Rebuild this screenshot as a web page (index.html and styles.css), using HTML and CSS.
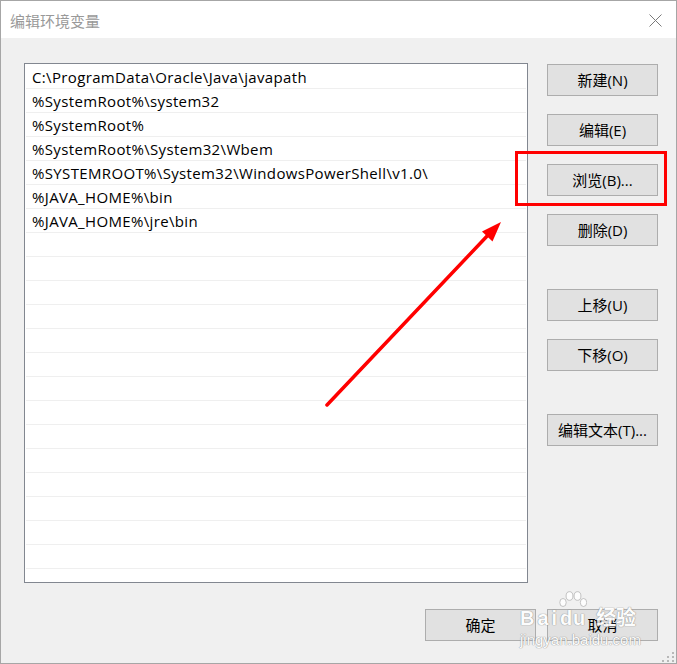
FILE: index.html
```html
<!DOCTYPE html>
<html lang="zh-CN">
<head>
<meta charset="utf-8">
<title>编辑环境变量</title>
<link rel="stylesheet" href="styles.css">
</head>
<body>
<div class="window">
  <div class="titlebar">
    <span class="title">编辑环境变量</span>
    <svg class="close" width="13" height="13" viewBox="0 0 13 13"><path d="M0.5 0.5 L12.5 12.5 M12.5 0.5 L0.5 12.5" stroke="#7a7a7a" stroke-width="1" fill="none"/></svg>
  </div>
  <div class="body">
    <div class="main">
      <div class="listbox">
        <div class="row">C:\ProgramData\Oracle\Java\javapath</div>
        <div class="row">%SystemRoot%\system32</div>
        <div class="row">%SystemRoot%</div>
        <div class="row">%SystemRoot%\System32\Wbem</div>
        <div class="row">%SYSTEMROOT%\System32\WindowsPowerShell\v1.0\</div>
        <div class="row">%JAVA_HOME%\bin</div>
        <div class="row">%JAVA_HOME%\jre\bin</div>
        <div class="row"></div><div class="row"></div><div class="row"></div>
        <div class="row"></div><div class="row"></div><div class="row"></div>
        <div class="row"></div><div class="row"></div><div class="row"></div>
        <div class="row"></div><div class="row"></div><div class="row"></div>
        <div class="row"></div><div class="row"></div><div class="row"></div>
      </div>
      <div class="actions">
        <button class="btn">新建(N)</button>
        <button class="btn">编辑(E)</button>
        <button class="btn">浏览(B)...</button>
        <button class="btn">删除(D)</button>
        <button class="btn spaced">上移(U)</button>
        <button class="btn">下移(O)</button>
        <button class="btn spaced">编辑文本(T)...</button>
      </div>
    </div>
    <div class="footer">
      <button class="btn">确定</button>
      <button class="btn">取消</button>
    </div>
  </div>

  <svg class="annot" width="677" height="664" viewBox="0 0 677 664">
    <rect x="516.5" y="152.5" width="149" height="52" fill="none" stroke="#ff0000" stroke-width="3"/>
    <line x1="327" y1="405" x2="490" y2="233" stroke="#ff0000" stroke-width="3.5" stroke-linecap="round"/>
    <polygon points="501,222 482,231.5 492.5,241.5" fill="#ff0000"/>
    <g fill="#b8b8b8">
      <rect x="672" y="652" width="2" height="2"/>
      <rect x="667" y="656" width="2" height="2"/>
      <rect x="672" y="656" width="2" height="2"/>
      <rect x="662" y="660" width="2" height="2"/>
      <rect x="667" y="660" width="2" height="2"/>
      <rect x="672" y="660" width="2" height="2"/>
    </g>
  </svg>

  <div class="watermark">
    <div class="wm-logo">
      <span class="wm-bai">Bai</span>
      <span class="wm-paw">
        <svg class="wm-toes" width="28" height="17" viewBox="0 0 28 17">
          <g fill="#ffffff" stroke="#9a9a9a" stroke-opacity="0.6" stroke-width="1">
            <ellipse cx="4" cy="11.5" rx="3.2" ry="4"/>
            <ellipse cx="10.5" cy="5" rx="3.4" ry="4.3"/>
            <ellipse cx="18.5" cy="5" rx="3.4" ry="4.3"/>
            <ellipse cx="24.5" cy="11.5" rx="3.2" ry="4"/>
          </g>
        </svg>
        <span class="wm-du">du</span>
      </span>
      <span class="wm-jy">经验</span>
    </div>
    <div class="wm-url">jingyan.baidu.com</div>
  </div>
</div>
</body>
</html>
```
FILE: styles.css
```css
html, body {
  margin: 0;
  padding: 0;
  background: #ffffff;
}

.window {
  position: relative;
  width: 677px;
  height: 664px;
  box-sizing: border-box;
  border: 1px solid #a6a6a6;
  display: flex;
  flex-direction: column;
  overflow: hidden;
  font-family: "Open Sans", "Noto Sans CJK SC", sans-serif;
}

.titlebar {
  height: 37px;
  flex: 0 0 37px;
  background: #ffffff;
  display: flex;
  align-items: center;
  justify-content: space-between;
  padding: 0 14px 0 9px;
}

.title {
  font-family: "Noto Sans CJK SC", sans-serif;
  font-size: 15px;
  line-height: 15px;
  color: #999999;
  padding-top: 2px;
}

.close {
  display: block;
  margin-top: 1px;
}

.body {
  flex: 1;
  background: #f0f0f0;
  padding: 25px 18px 0 23px;
  display: flex;
  flex-direction: column;
}

.main {
  display: flex;
  gap: 19px;
}

.listbox {
  width: 504px;
  height: 520px;
  box-sizing: border-box;
  border: 1px solid #828790;
  background: #ffffff;
  padding: 1px 1px 0 1px;
  overflow: hidden;
}

.row {
  box-sizing: content-box;
  height: 22px;
  line-height: 23px;
  border-bottom: 1px solid #efefef;
  padding: 1px 0 0 6px;
  font-size: 15px;
  letter-spacing: 0.35px;
  color: #000000;
  white-space: nowrap;
}

.actions {
  display: flex;
  flex-direction: column;
  gap: 18px;
  padding-top: 1px;
}

.btn {
  width: 111px;
  height: 32px;
  box-sizing: border-box;
  margin: 0;
  padding: 0;
  border: 1px solid #adadad;
  background: #e1e1e1;
  color: #000000;
  font-family: "Open Sans", "Noto Sans CJK SC", sans-serif;
  font-size: 15px;
  line-height: 30px;
  text-align: center;
  white-space: nowrap;
}

.spaced {
  margin-top: 25px;
}

.footer {
  margin-top: 26px;
  display: flex;
  justify-content: flex-end;
  gap: 11px;
}

.annot {
  position: absolute;
  left: -1px;
  top: -1px;
  pointer-events: none;
}

.watermark {
  position: absolute;
  left: 519px;
  top: 589px;
  color: #ffffff;
  opacity: 0.9;
  text-shadow: 0 0 1px #8a8a8a, 0 0 1px #8a8a8a;
  pointer-events: none;
  font-family: "Liberation Sans", sans-serif;
}

.wm-logo {
  display: flex;
  align-items: flex-end;
  height: 37px;
}

.wm-bai {
  font-size: 20px;
  font-weight: bold;
  letter-spacing: 3px;
  line-height: 18px;
}

.wm-paw {
  display: flex;
  flex-direction: column;
  align-items: center;
  margin-left: -1px;
}

.wm-toes {
  display: block;
  margin-bottom: 1px;
}

.wm-du {
  font-size: 20px;
  font-weight: bold;
  line-height: 18px;
  letter-spacing: 1px;
}

.wm-jy {
  font-family: "Noto Sans CJK SC", sans-serif;
  font-size: 20px;
  font-weight: bold;
  line-height: 20px;
  margin-left: 9px;
}

.wm-url {
  font-size: 15px;
  line-height: 16px;
  margin-top: 5px;
}
```
